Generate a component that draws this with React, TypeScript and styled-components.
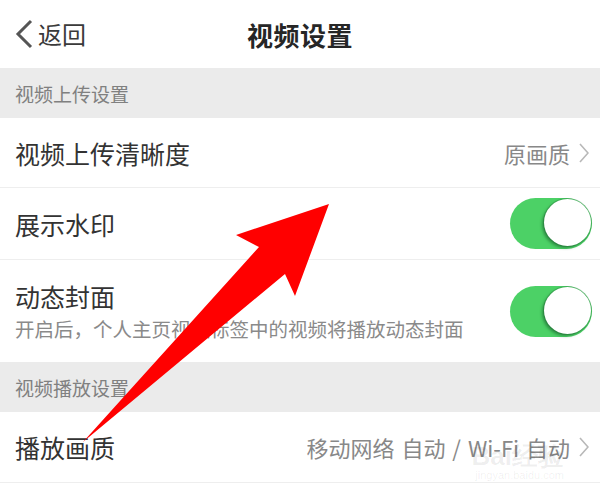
import React from "react";
import styled, { createGlobalStyle } from "styled-components";

const Global = createGlobalStyle`
  html, body { margin: 0; padding: 0; background: #ffffff; }
  body { font-family: "Noto Sans CJK SC", "Noto Sans", sans-serif; }
`;

const Page = styled.div`
  position: relative;
  width: 600px;
  height: 494px;
  overflow: hidden;
  background: #ffffff;
  display: flex;
  flex-direction: column;
`;

const Header = styled.header`
  height: 68px;
  flex: none;
  display: grid;
  grid-template-columns: 1fr auto 1fr;
  align-items: center;
  padding: 0 15px;
  background: #ffffff;
`;

const Back = styled.div`
  display: flex;
  align-items: center;
  gap: 5px;
  color: #3a3a3a;
  font-size: 24px;
  line-height: 1;
`;

const Title = styled.h1`
  margin: 0;
  font-size: 26px;
  font-weight: 700;
  color: #262626;
  letter-spacing: 0.5px;
`;

const Section = styled.div`
  height: 50px;
  flex: none;
  display: flex;
  align-items: center;
  padding: 0 15px;
  background: #ebebeb;
  color: #808080;
  font-size: 19px;
`;

const Row = styled.div<{ $h: number; $border?: boolean }>`
  height: ${(p) => p.$h}px;
  flex: none;
  display: flex;
  align-items: center;
  justify-content: space-between;
  padding: 0 8px 0 15px;
  box-sizing: border-box;
  border-bottom: ${(p) => (p.$border ? "1px solid #eeeeee" : "none")};
`;

const TextCol = styled.div`
  display: flex;
  flex-direction: column;
  gap: 6px;
`;

const Label = styled.span`
  font-size: 25px;
  color: #333333;
  line-height: 30px;
`;

const Sub = styled.span`
  font-size: 19.5px;
  color: #8a8a8a;
  line-height: 24px;
`;

const Value = styled.div`
  display: flex;
  align-items: center;
  gap: 9px;
  padding-right: 3px;
  font-size: 22px;
  color: #888888;
  word-spacing: 2px;
`;

const Track = styled.div`
  position: relative;
  width: 82px;
  height: 51px;
  border-radius: 26px;
  background: #4cd166;
  box-sizing: border-box;
`;

const Knob = styled.div`
  position: absolute;
  top: 1px;
  right: 1px;
  width: 47px;
  height: 47px;
  border-radius: 50%;
  background: #ffffff;
  box-shadow: -2px 2px 3px rgba(20, 90, 40, 0.55), 0 0 0 1px rgba(40, 120, 60, 0.35);
`;

const Overlay = styled.svg`
  position: absolute;
  left: 0;
  top: 0;
  pointer-events: none;
`;

const Watermark = styled.div`
  position: absolute;
  right: 36px;
  bottom: 12px;
  display: flex;
  flex-direction: column;
  align-items: flex-end;
  color: rgba(0, 0, 0, 0.07);
  font-family: "Liberation Sans", sans-serif;
  pointer-events: none;
`;

const WmBig = styled.span`
  font-size: 26px;
  font-weight: 700;
  line-height: 26px;
`;

const WmSmall = styled.span`
  font-size: 11px;
  line-height: 13px;
`;

const Chevron = () => (
  <svg width="10" height="20" viewBox="0 0 10 20">
    <polyline points="1,1 9,10 1,19" fill="none" stroke="#b8b8b8" strokeWidth="1.6" />
  </svg>
);

const BackIcon = () => (
  <svg width="18" height="30" viewBox="0 0 18 30">
    <polyline points="16,2 3,15 16,28" fill="none" stroke="#555555" strokeWidth="3" />
  </svg>
);

const Toggle = () => (
  <Track>
    <Knob />
  </Track>
);

export default function App() {
  return (
    <>
      <Global />
      <Page>
        <Header>
          <Back>
            <BackIcon />
            <span>返回</span>
          </Back>
          <Title>视频设置</Title>
          <div />
        </Header>
        <Section>视频上传设置</Section>
        <Row $h={70} $border>
          <Label>视频上传清晰度</Label>
          <Value>
            原画质
            <Chevron />
          </Value>
        </Row>
        <Row $h={72} $border>
          <Label>展示水印</Label>
          <Toggle />
        </Row>
        <Row $h={102}>
          <TextCol>
            <Label>动态封面</Label>
            <Sub>开启后，个人主页视频标签中的视频将播放动态封面</Sub>
          </TextCol>
          <Toggle />
        </Row>
        <Section>视频播放设置</Section>
        <Row $h={71} $border>
          <Label>播放画质</Label>
          <Value>
            移动网络 自动 / Wi-Fi 自动
            <Chevron />
          </Value>
        </Row>
        <Watermark>
          <WmBig>Bai经验</WmBig>
          <WmSmall>jingyan.baidu.com</WmSmall>
        </Watermark>
        <Overlay width="600" height="494" viewBox="0 0 600 494">
          <polygon
            points="83,442 259,247 236,235 329,204 295,296 285,274"
            fill="#ff0000"
          />
        </Overlay>
      </Page>
    </>
  );
}
